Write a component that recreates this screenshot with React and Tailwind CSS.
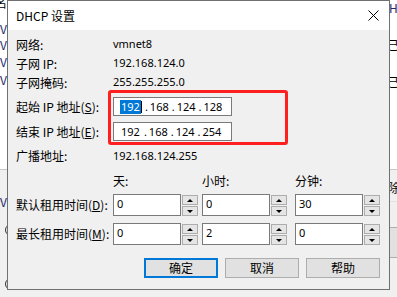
import React from "react";

const font = "font-['Noto_Sans_CJK_SC','Noto_Sans',sans-serif]";
const num = "font-['Noto_Sans',sans-serif] text-[11px]";

const Arrow = ({ up }) => (
  <span
    className={`w-0 h-0 border-x-[3px] border-x-transparent ${
      up ? "border-b-[3px] border-b-black" : "border-t-[3px] border-t-black"
    }`}
  />
);

const Spinner = ({ value, className = "" }) => (
  <div className={`flex h-[22px] ${className}`}>
    <div className={`w-[68px] h-full border border-[#7a7a7a] bg-white pl-[3px] pt-[2px] leading-[14px] ${num}`}>
      {value}
    </div>
    <div className="ml-[1px] w-[16px] flex flex-col gap-[1px] pt-[1px]">
      <div className="h-[10px] border border-[#adadad] bg-[#e5e5e5] flex items-center justify-center">
        <Arrow up />
      </div>
      <div className="h-[10px] border border-[#adadad] bg-[#e5e5e5] flex items-center justify-center">
        <Arrow />
      </div>
    </div>
  </div>
);

const IpBox = ({ parts, selected }) => (
  <div className={`w-[119px] h-[19px] border border-[#7a7a7a] bg-white flex items-center pl-[6px] leading-[14px] ${num}`}>
    {parts.map((p, i) => (
      <React.Fragment key={i}>
        {i > 0 && <span className="ml-[3px] mr-[2px]">.</span>}
        {selected && i === 0 ? (
          <>
            <span className="bg-[#0078d7] text-white px-[1px]">{p}</span>
            <span className="w-[1px] h-[12px] bg-black" />
          </>
        ) : (
          <span className={i === 0 ? "px-[1px]" : ""}>{p}</span>
        )}
      </React.Fragment>
    ))}
  </div>
);

const Acc = ({ k }) => (
  <>
    (<span className="underline underline-offset-1">{k}</span>):
  </>
);

const Btn = ({ children, primary }) => (
  <div
    className={`w-[74px] h-[20px] flex items-center justify-center text-[12px] bg-[#e1e1e1] ${
      primary ? "border-2 border-[#0078d7]" : "border border-[#adadad]"
    }`}
  >
    {children}
  </div>
);

export default function App() {
  return (
    <div className={`relative w-[397px] h-[297px] overflow-hidden bg-[#f0f0f0] text-black ${font}`}>
      {/* window behind the dialog */}
      <div className="absolute left-0 top-0 w-full h-[170px] bg-white border-b border-[#c8c8c8]" />
      <div className="absolute left-0 top-[201px] w-full h-px bg-[#e3e3e3]" />
      <span className="absolute left-[-5px] top-[-6px] text-[12px]">名</span>
      {[20, 36, 53, 71, 193].map((t) => (
        <span key={t} className="absolute left-[0px] text-[12px] text-[#1c2a6e]" style={{ top: t }}>V</span>
      ))}
      {[224, 278].map((t) => (
        <span key={t} className="absolute left-[5px] w-[12px] h-[12px] rounded-full border border-[#333]" style={{ top: t }} />
      ))}
      <span className="absolute left-[389px] top-[-1px] text-[12px] text-[#1c2a6e]">He</span>
      <span className="absolute left-[387px] top-[36px] text-[12px]">已</span>
      <span className="absolute left-[387px] top-[73px] text-[12px]">已</span>
      <span className="absolute left-[388px] top-[179px] text-[12px]">除</span>
      <div className="absolute left-[389px] top-[227px] w-[20px] h-[31px] bg-[#e1e1e1] border border-[#adadad]" />
      <span className="absolute left-[47px] top-[275px] text-[12px]">将主机虚拟适配器连接到此网络</span>

      {/* dialog */}
      <div className="absolute left-[7px] top-0 w-[383px] h-[290px] border border-[#707070] bg-[#f0f0f0] flex flex-col">
        <div className="h-[29px] bg-white flex items-center justify-between pl-[8px] pr-[10px] text-[12px]">
          <span>DHCP 设置</span>
          <svg width="11" height="11" viewBox="0 0 11 11">
            <path d="M0.5 0.5L10.5 10.5M10.5 0.5L0.5 10.5" stroke="#000" strokeWidth="1" />
          </svg>
        </div>

        <div className="relative flex-1 px-[8px] pt-[5px] text-[12px]">
          {[
            ["网络:", "vmnet8"],
            ["子网 IP:", "192.168.124.0"],
            ["子网掩码:", "255.255.255.0"],
          ].map(([l, v]) => (
            <div key={l} className="h-[19px] flex items-center">
              <span className="w-[97px]">{l}</span>
              <span className={num}>{v}</span>
            </div>
          ))}

          <div className="mt-[5px] h-[19px] flex items-center">
            <span className="w-[97px]">起始 IP 地址<Acc k="S" /></span>
            <IpBox parts={["192", "168", "124", "128"]} selected />
          </div>
          <div className="mt-[6px] h-[19px] flex items-center">
            <span className="w-[97px]">结束 IP 地址<Acc k="E" /></span>
            <IpBox parts={["192", "168", "124", "254"]} />
          </div>

          <div className="mt-[6px] h-[18px] flex items-center">
            <span className="w-[97px]">广播地址:</span>
            <span className={num}>192.168.124.255</span>
          </div>

          <div className="mt-[7px] h-[18px] flex items-center">
            <span className="ml-[97px] w-[89px]">天:</span>
            <span className="w-[93px]">小时:</span>
            <span>分钟:</span>
          </div>

          <div className="mt-[4px] flex items-center">
            <span className="w-[97px]">默认租用时间<Acc k="D" /></span>
            <Spinner value="0" />
            <Spinner value="0" className="ml-[4px]" />
            <Spinner value="30" className="ml-[8px]" />
          </div>
          <div className="mt-[7px] flex items-center">
            <span className="w-[97px]">最长租用时间<Acc k="M" /></span>
            <Spinner value="0" />
            <Spinner value="2" className="ml-[4px]" />
            <Spinner value="0" className="ml-[8px]" />
          </div>

          <div className="mt-[13px] flex justify-end gap-[7px] pr-[1px]">
            <Btn primary>确定</Btn>
            <Btn>取消</Btn>
            <Btn>帮助</Btn>
          </div>

          {/* red annotation box */}
          <div className="absolute left-[100px] top-[60px] w-[180px] h-[55px] border-[3px] border-[#ff1f1f] rounded-[3px]" />
        </div>
      </div>
    </div>
  );
}
